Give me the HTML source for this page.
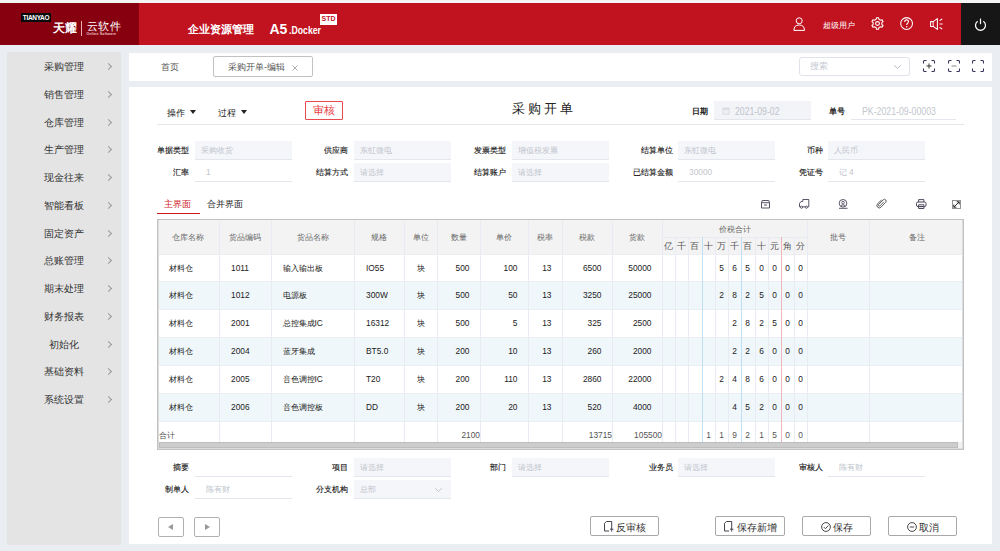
<!DOCTYPE html>
<html><head><meta charset="utf-8">
<style>
*{margin:0;padding:0;box-sizing:border-box}
html,body{width:1000px;height:551px;overflow:hidden;background:#eaeef3;font-family:"Liberation Sans",sans-serif;color:#333}
.a{position:absolute;white-space:nowrap}
#top{left:0;top:0;width:1000px;height:3px;background:#f4f4f4}
#hdr{left:0;top:3px;width:1000px;height:42px;background:#c1121f}
#logo{left:0;top:3px;width:139px;height:42px;background:#860010}
#pwr{left:961px;top:3px;width:39px;height:42px;background:#161616}
#side{left:7px;top:52px;width:114px;height:493px;background:#e4e4e4}
.mi{position:absolute;left:0;width:115px;height:20px;font-size:10.3px;color:#333;line-height:20px;font-weight:500}
.mi span{position:absolute;left:0;width:113px;text-align:center}
.mi i{position:absolute;left:99px;top:7px;width:5px;height:5px;border-right:1px solid #999;border-top:1px solid #999;transform:rotate(45deg)}
#tabbar{left:129px;top:53px;width:863px;height:28px;background:#fff}
#panel{left:129px;top:87px;width:863px;height:457px;background:#fff}
.lbl{position:absolute;font-size:8.4px;color:#111;text-align:right;line-height:19px;height:19px;font-weight:500;-webkit-text-stroke:0.12px #111}
.inp{position:absolute;height:19px;font-size:8.2px;color:#c0c4cc;line-height:19px;padding-left:6px;border-bottom:1px solid #e3e6ec}
.inp.bg{background:#f5f6fa}
.th{position:absolute;font-size:8px;color:#666;text-align:center;line-height:14px}
.td{position:absolute;font-size:8.4px;color:#222;line-height:14px;font-weight:500}
.n{font-size:9.5px;transform:scaleX(0.88)}
.nl{transform-origin:0 0}.nr{transform-origin:100% 0}.nc{transform-origin:50% 0}
.vl{position:absolute;width:1px;background:#e9ebf2}
.btn{position:absolute;height:20px;border:1px solid #a9a9a9;border-radius:2px;background:#fff;font-size:10.5px;color:#333;line-height:18px}
svg{position:absolute;overflow:visible}
</style></head><body>
<div class="a" id="top"></div><div class="a" id="hdr"></div><div class="a" id="logo"></div><div class="a" id="pwr"></div>
<div class="a" style="left:21px;top:12.5px;width:30px;height:9px;background:#0a0a0a"></div>
<div class="a" style="left:21px;top:12.5px;width:30px;height:9px;color:#fff;font-size:6.5px;line-height:9px;text-align:center;font-weight:bold;letter-spacing:-0.3px">TIANYAO</div>
<div class="a" style="left:52.5px;top:19.5px;color:#fff;font-size:12.4px;line-height:16px;font-weight:bold">天耀</div>
<div class="a" style="left:81px;top:21px;width:1px;height:15px;background:#e8b0b5"></div>
<div class="a" style="left:87px;top:19.8px;color:#fff;font-size:10.5px;line-height:13px;letter-spacing:0.3px">云软件</div>
<div class="a" style="left:86.5px;top:32.5px;color:#f0c8cc;font-size:3.5px;line-height:3px;letter-spacing:0.2px;font-weight:bold">Online Software</div>
<div class="a" style="left:187.5px;top:21.3px;color:#fff;font-size:11.4px;line-height:16px;font-weight:bold">企业资源管理</div>
<div class="a" style="left:269.5px;top:21px;color:#fff;font-size:14px;line-height:16px;font-weight:bold">A5</div>
<div class="a" style="left:288.5px;top:23.8px;color:#fff;font-size:10.5px;line-height:12px;font-weight:bold;transform:scaleX(0.83);transform-origin:0 0">.Docker</div>
<div class="a" style="left:320px;top:14px;width:17px;height:10.5px;background:#fff;color:#c1121f;font-size:7px;line-height:10.5px;text-align:center;font-weight:bold">STD</div>
<svg style="left:793px;top:17px" width="13" height="14" viewBox="0 0 13 14"><circle cx="6.2" cy="3.8" r="3" fill="none" stroke="#fff" stroke-width="1"/><path d="M0.9 13.4 Q0.9 8 6.2 8 Q11.5 8 11.5 13.4 Z" fill="none" stroke="#fff" stroke-width="1" stroke-linejoin="round"/></svg>
<div class="a" style="left:823.3px;top:20.3px;color:#fff;font-size:8.2px;line-height:12px;font-weight:500">超级用户</div>
<svg style="left:870.5px;top:17.3px" width="13" height="13" viewBox="0 0 13 13"><path d="M4.35 2.78 L5.23 2.08 L5.48 0.69 L7.52 0.69 L7.77 2.08 L8.65 2.78 L9.70 3.19 L11.02 2.71 L12.04 4.48 L10.96 5.39 L10.80 6.50 L10.96 7.61 L12.04 8.52 L11.02 10.29 L9.70 9.81 L8.65 10.22 L7.77 10.92 L7.52 12.31 L5.48 12.31 L5.23 10.92 L4.35 10.22 L3.30 9.81 L1.98 10.29 L0.96 8.52 L2.04 7.61 L2.20 6.50 L2.04 5.39 L0.96 4.48 L1.98 2.71 L3.30 3.19Z" fill="none" stroke="#fff" stroke-width="1.1" stroke-linejoin="round"/><circle cx="6.5" cy="6.5" r="1.9" fill="none" stroke="#fff" stroke-width="1.1"/></svg>
<svg style="left:900px;top:17.4px" width="13" height="13" viewBox="0 0 13 13"><circle cx="6.6" cy="6.5" r="5.9" fill="none" stroke="#fff" stroke-width="1.05"/><path d="M4.7 4.9 C4.7 3.6 5.6 2.9 6.6 2.9 C7.7 2.9 8.5 3.6 8.5 4.7 C8.5 6 6.7 6.2 6.7 7.9" fill="none" stroke="#fff" stroke-width="1.1"/><circle cx="6.7" cy="9.7" r="0.75" fill="#fff"/></svg>
<svg style="left:930px;top:18px" width="13" height="12" viewBox="0 0 13 12"><path d="M0.6 3.6h2.6L7.4 0.6v10.8L3.2 8.4H0.6z" fill="none" stroke="#fff" stroke-width="1.05" stroke-linejoin="round"/><path d="M3.2 3.6v4.8" stroke="#fff" stroke-width="0.9"/><path d="M9.6 2.6l2.6-1.6M9.6 6h3M9.6 9.4l2.6 1.6" stroke="#fff" stroke-width="1.05"/></svg>
<svg style="left:973.5px;top:17.8px" width="13" height="13" viewBox="0 0 13 13"><path d="M3.7 3.2 A5 5 0 1 0 9.3 3.2" fill="none" stroke="#fff" stroke-width="1.25"/><path d="M6.5 0.6v5.6" stroke="#fff" stroke-width="1.25"/></svg>
<div class="a" id="side">
<div class="mi" style="top:5.0px"><span>采购管理</span><i></i></div>
<div class="mi" style="top:32.8px"><span>销售管理</span><i></i></div>
<div class="mi" style="top:60.5px"><span>仓库管理</span><i></i></div>
<div class="mi" style="top:88.2px"><span>生产管理</span><i></i></div>
<div class="mi" style="top:116.0px"><span>现金往来</span><i></i></div>
<div class="mi" style="top:143.8px"><span>智能看板</span><i></i></div>
<div class="mi" style="top:171.5px"><span>固定资产</span><i></i></div>
<div class="mi" style="top:199.2px"><span>总账管理</span><i></i></div>
<div class="mi" style="top:227.0px"><span>期末处理</span><i></i></div>
<div class="mi" style="top:254.8px"><span>财务报表</span><i></i></div>
<div class="mi" style="top:282.5px"><span>初始化</span><i></i></div>
<div class="mi" style="top:310.2px"><span>基础资料</span><i></i></div>
<div class="mi" style="top:338.0px"><span>系统设置</span><i></i></div>
</div>
<div class="a" id="tabbar"></div>
<div class="a" style="left:161px;top:60px;font-size:8.8px;line-height:14px;color:#555">首页</div>
<div class="a" style="left:213px;top:56px;width:100px;height:21px;border:1px solid #c2c2c2;border-radius:2px"></div>
<div class="a" style="left:228px;top:60px;font-size:8.8px;line-height:14px;color:#555">采购开单-编辑</div>
<svg style="left:291.5px;top:64.5px" width="6" height="6" viewBox="0 0 6 6"><path d="M0.4 0.4l5.2 5.2M5.6 0.4l-5.2 5.2" stroke="#9a9a9a" stroke-width="0.8"/></svg>
<div class="a" style="left:799px;top:57px;width:111px;height:19px;border:1px solid #dfe2e8;border-radius:3px"></div>
<div class="a" style="left:809.5px;top:60px;font-size:8.5px;line-height:13px;color:#c5c8d0">搜索</div>
<svg style="left:894px;top:64.5px" width="7" height="4" viewBox="0 0 7 4"><path d="M0.3 0.3l3.2 3.2 3.2-3.2" fill="none" stroke="#aab" stroke-width="0.8"/></svg>
<svg style="left:923px;top:60px" width="12" height="12" viewBox="0 0 12 12"><path d="M0.5 3.5V1.5Q0.5 0.5 1.5 0.5H3.5M8.5 0.5H10.5Q11.5 0.5 11.5 1.5V3.5M11.5 8.5V10.5Q11.5 11.5 10.5 11.5H8.5M3.5 11.5H1.5Q0.5 11.5 0.5 10.5V8.5" fill="none" stroke="#3b2d5c" stroke-width="1.05"/><path d="M6 3.5v5M3.5 6h5" stroke="#333" stroke-width="1"/></svg>
<svg style="left:947.5px;top:60px" width="12" height="12" viewBox="0 0 12 12"><path d="M0.5 3.5V1.5Q0.5 0.5 1.5 0.5H3.5M8.5 0.5H10.5Q11.5 0.5 11.5 1.5V3.5M11.5 8.5V10.5Q11.5 11.5 10.5 11.5H8.5M3.5 11.5H1.5Q0.5 11.5 0.5 10.5V8.5" fill="none" stroke="#3b2d5c" stroke-width="1.05"/><path d="M3.5 6h5" stroke="#888" stroke-width="1"/></svg>
<svg style="left:971.5px;top:60px" width="12" height="12" viewBox="0 0 12 12"><path d="M0.5 3.5V1.5Q0.5 0.5 1.5 0.5H3.5M8.5 0.5H10.5Q11.5 0.5 11.5 1.5V3.5M11.5 8.5V10.5Q11.5 11.5 10.5 11.5H8.5M3.5 11.5H1.5Q0.5 11.5 0.5 10.5V8.5" fill="none" stroke="#3b2d5c" stroke-width="1.05"/></svg>
<div class="a" id="panel"></div>
<div class="a" style="left:167px;top:105.8px;font-size:8.5px;line-height:14px;color:#222">操作</div>
<svg style="left:190px;top:109.5px" width="6" height="4" viewBox="0 0 6 4"><path d="M0 0h6L3 4z" fill="#222"/></svg>
<div class="a" style="left:218px;top:105.8px;font-size:8.5px;line-height:14px;color:#222">过程</div>
<svg style="left:241px;top:109.5px" width="6" height="4" viewBox="0 0 6 4"><path d="M0 0h6L3 4z" fill="#222"/></svg>
<div class="a" style="left:305px;top:101px;width:38px;height:19px;border:1px solid #e84a50;border-radius:1px;color:#e63c43;font-size:10.8px;line-height:17px;text-align:center">审核</div>
<div class="a" style="left:511.5px;top:99.5px;font-size:13px;line-height:17px;color:#222;letter-spacing:3px">采购开单</div>
<div class="a" style="left:692px;top:105px;font-size:8.2px;line-height:13px;color:#222;font-weight:bold">日期</div>
<div class="a" style="left:714px;top:101px;width:97px;height:19px;background:#f2f4f8;border-bottom:1px solid #e3e6ec"></div>
<svg style="left:722px;top:107px" width="8" height="8" viewBox="0 0 8 8"><rect x="0.3" y="0.6" width="7.4" height="7.1" rx="1.2" fill="#d9dce2"/><rect x="1.3" y="2.8" width="5.4" height="3.9" fill="#eceef2"/></svg>
<div class="a" style="left:734.5px;top:104.5px;font-size:10px;line-height:13px;color:#bfc3cb;transform:scaleX(0.87);transform-origin:0 0">2021-09-02</div>
<div class="a" style="left:828.5px;top:104.5px;font-size:8.2px;line-height:13px;color:#222;font-weight:bold">单号</div>
<div class="a" style="left:851px;top:119px;width:105px;height:1px;background:#e3e6ec"></div>
<div class="a" style="left:862px;top:104.5px;font-size:10px;line-height:13px;color:#c3c6cd;transform:scaleX(0.875);transform-origin:0 0">PK-2021-09-00003</div>
<div class="a" style="left:157px;top:124px;width:807px;height:1px;background:#e6e6e6"></div>
<div class="lbl" style="left:119px;top:140.5px;width:70px">单据类型</div>
<div class="inp bg" style="left:195px;top:140.5px;width:97px;color:#c0c4cc">采购收货</div>
<div class="lbl" style="left:278px;top:140.5px;width:70px">供应商</div>
<div class="inp bg" style="left:354px;top:140.5px;width:97px;color:#c0c4cc">东虹微电</div>
<div class="lbl" style="left:436px;top:140.5px;width:70px">发票类型</div>
<div class="inp bg" style="left:512px;top:140.5px;width:97px;color:#c0c4cc">增值税发票</div>
<div class="lbl" style="left:603px;top:140.5px;width:70px">结算单位</div>
<div class="inp bg" style="left:678px;top:140.5px;width:97px;color:#c0c4cc">东虹微电</div>
<div class="lbl" style="left:753px;top:140.5px;width:70px">币种</div>
<div class="inp bg" style="left:828px;top:140.5px;width:97px;color:#c0c4cc">人民币</div>
<div class="lbl" style="left:119px;top:162.5px;width:70px">汇率</div>
<div class="inp" style="left:195px;top:162.5px;width:97px;color:#c0c4cc"></div>
<div class="a" style="left:205.5px;top:165.0px;font-size:9.5px;line-height:14px;color:#c3c6cd;transform:scaleX(0.88);transform-origin:0 0">1</div>
<div class="lbl" style="left:278px;top:162.5px;width:70px">结算方式</div>
<div class="inp bg" style="left:354px;top:162.5px;width:97px;color:#c0c4cc">请选择</div>
<div class="lbl" style="left:436px;top:162.5px;width:70px">结算账户</div>
<div class="inp bg" style="left:512px;top:162.5px;width:97px;color:#c0c4cc">请选择</div>
<div class="lbl" style="left:603px;top:162.5px;width:70px">已结算金额</div>
<div class="inp" style="left:678px;top:162.5px;width:97px;color:#c0c4cc"></div>
<div class="a" style="left:689px;top:165.0px;font-size:9.5px;line-height:14px;color:#c3c6cd;transform:scaleX(0.88);transform-origin:0 0">30000</div>
<div class="lbl" style="left:753px;top:162.5px;width:70px">凭证号</div>
<div class="inp" style="left:828px;top:162.5px;width:97px;color:#c0c4cc">&nbsp;&nbsp;记</div>
<div class="a" style="left:849px;top:165.0px;font-size:9.5px;line-height:14px;color:#c3c6cd;transform:scaleX(0.88);transform-origin:0 0">4</div>
<div class="a" style="left:164px;top:197px;font-size:9.3px;line-height:14px;color:#d0141e">主界面</div>
<div class="a" style="left:157px;top:212.5px;width:43px;height:1.5px;background:#d0141e"></div>
<div class="a" style="left:207px;top:197px;font-size:9.3px;line-height:14px;color:#222">合并界面</div>
<svg style="left:761px;top:200px" width="9" height="9" viewBox="0 0 9 9"><path d="M1.2 0.5h6.6l0.7 2.2v5.3h-8v-5.3z" fill="none" stroke="#4a4258" stroke-width="0.9" stroke-linejoin="round"/><path d="M0.5 2.7h8M3 5h3" stroke="#4a4258" stroke-width="0.9"/></svg>
<svg style="left:799px;top:199.2px" width="11" height="10" viewBox="0 0 11 10"><path d="M3.8 0.5h6v7.3h-1.2M3.8 0.5v2H2L0.5 4.5v3.3h0.8M3.6 7.8h2.6" fill="none" stroke="#4a4258" stroke-width="0.9" stroke-linejoin="round"/><circle cx="2.5" cy="8.2" r="1.1" fill="none" stroke="#4a4258" stroke-width="0.9"/><circle cx="7.4" cy="8.2" r="1.1" fill="none" stroke="#4a4258" stroke-width="0.9"/></svg>
<svg style="left:838px;top:199.2px" width="11" height="10" viewBox="0 0 11 10"><circle cx="5" cy="4.3" r="3.8" fill="none" stroke="#4a4258" stroke-width="0.9"/><circle cx="5" cy="3.6" r="1.3" fill="none" stroke="#4a4258" stroke-width="0.8"/><path d="M2.8 6.6Q5 4.8 7.2 6.6M1 9.3h8.5" fill="none" stroke="#4a4258" stroke-width="0.9"/></svg>
<svg style="left:877px;top:199px" width="10" height="10" viewBox="0 0 10 10"><path d="M6.4 3.2L3 6.9a1 1 0 0 1-1.5-1.4L6.2 0.9a1.7 1.7 0 0 1 2.5 2.4L4 8.2a2.4 2.4 0 0 1-3.4-3.4L4.4 1" fill="none" stroke="#555" stroke-width="0.95" stroke-linecap="round"/></svg>
<svg style="left:915.5px;top:199px" width="11" height="10" viewBox="0 0 11 10"><rect x="0.5" y="3" width="9.5" height="4.6" rx="1.5" fill="none" stroke="#4a4258" stroke-width="1"/><path d="M2.6 3V0.6h5.3V3M2.6 5.8v3.7h5.3V5.8zM4 7.6h2.5" fill="none" stroke="#4a4258" stroke-width="0.95"/></svg>
<svg style="left:952px;top:200px" width="9" height="9" viewBox="0 0 9 9"><rect x="0.5" y="0.5" width="8" height="8" fill="none" stroke="#888" stroke-width="0.9"/><path d="M1.8 7.2L7.2 1.8M4.6 1.8h2.6v2.6M1.8 4.6v2.6h2.6" fill="none" stroke="#222" stroke-width="0.95"/></svg>
<div class="a" style="left:157px;top:219px;width:807px;height:231px;border:1px solid #c2c2c2;box-shadow:inset 1px 1px 0 #dcdcdc,inset -1px -1px 0 #dcdcdc;background:#fff"></div>
<div class="a" style="left:159px;top:220px;width:803px;height:34px;background:#f3f3f3"></div>
<div class="a" style="left:159px;top:281px;width:803px;height:28px;background:#f0f7fb"></div>
<div class="a" style="left:159px;top:337px;width:803px;height:28px;background:#f0f7fb"></div>
<div class="a" style="left:159px;top:393px;width:803px;height:28px;background:#f0f7fb"></div>
<div class="a" style="left:159px;top:254px;width:803px;height:1px;background:#eceef3"></div>
<div class="a" style="left:159px;top:281px;width:803px;height:1px;background:#eceef3"></div>
<div class="a" style="left:159px;top:309px;width:803px;height:1px;background:#eceef3"></div>
<div class="a" style="left:159px;top:337px;width:803px;height:1px;background:#eceef3"></div>
<div class="a" style="left:159px;top:365px;width:803px;height:1px;background:#eceef3"></div>
<div class="a" style="left:159px;top:393px;width:803px;height:1px;background:#eceef3"></div>
<div class="a" style="left:159px;top:421px;width:803px;height:1px;background:#eceef3"></div>
<div class="vl" style="left:219.0px;top:220px;height:222px;background:#e9ebf2"></div>
<div class="vl" style="left:271.0px;top:220px;height:222px;background:#e9ebf2"></div>
<div class="vl" style="left:354.0px;top:220px;height:222px;background:#e9ebf2"></div>
<div class="vl" style="left:404.0px;top:220px;height:222px;background:#e9ebf2"></div>
<div class="vl" style="left:437.0px;top:220px;height:222px;background:#e9ebf2"></div>
<div class="vl" style="left:480.0px;top:220px;height:222px;background:#e9ebf2"></div>
<div class="vl" style="left:528.0px;top:220px;height:222px;background:#e9ebf2"></div>
<div class="vl" style="left:562.0px;top:220px;height:222px;background:#e9ebf2"></div>
<div class="vl" style="left:612.0px;top:220px;height:222px;background:#e9ebf2"></div>
<div class="vl" style="left:662.0px;top:220px;height:222px;background:#e9ebf2"></div>
<div class="vl" style="left:675.2px;top:220px;height:222px;background:#e9ebf2"></div>
<div class="vl" style="left:688.4px;top:220px;height:222px;background:#e9ebf2"></div>
<div class="vl" style="left:701.6px;top:220px;height:222px;background:#e9ebf2"></div>
<div class="vl" style="left:714.8px;top:220px;height:222px;background:#e9ebf2"></div>
<div class="vl" style="left:728.0px;top:220px;height:222px;background:#e9ebf2"></div>
<div class="vl" style="left:741.3px;top:220px;height:222px;background:#e9ebf2"></div>
<div class="vl" style="left:754.5px;top:220px;height:222px;background:#e9ebf2"></div>
<div class="vl" style="left:767.7px;top:220px;height:222px;background:#e9ebf2"></div>
<div class="vl" style="left:780.9px;top:220px;height:222px;background:#e9ebf2"></div>
<div class="vl" style="left:794.1px;top:220px;height:222px;background:#e9ebf2"></div>
<div class="vl" style="left:807.3px;top:220px;height:222px;background:#e9ebf2"></div>
<div class="vl" style="left:869.0px;top:220px;height:222px;background:#e9ebf2"></div>
<div class="a" style="left:663.0px;top:220px;width:144.3px;height:17px;background:#f3f3f3"></div>
<div class="a" style="left:663.0px;top:237px;width:144.3px;height:1px;background:#e9ebf2"></div>
<div class="vl" style="left:701.6px;top:237px;height:205px;background:#bfdff5"></div>
<div class="vl" style="left:741.3px;top:237px;height:205px;background:#bfdff5"></div>
<div class="vl" style="left:780.9px;top:237px;height:205px;background:#f3b5bd"></div>
<div class="th" style="left:157.0px;top:230.5px;width:62.0px">仓库名称</div>
<div class="th" style="left:219.0px;top:230.5px;width:52.0px">货品编码</div>
<div class="th" style="left:271.0px;top:230.5px;width:83.0px">货品名称</div>
<div class="th" style="left:354.0px;top:230.5px;width:50.0px">规格</div>
<div class="th" style="left:404.0px;top:230.5px;width:33.0px">单位</div>
<div class="th" style="left:437.0px;top:230.5px;width:43.0px">数量</div>
<div class="th" style="left:480.0px;top:230.5px;width:48.0px">单价</div>
<div class="th" style="left:528.0px;top:230.5px;width:34.0px">税率</div>
<div class="th" style="left:562.0px;top:230.5px;width:50.0px">税款</div>
<div class="th" style="left:612.0px;top:230.5px;width:50.0px">货款</div>
<div class="th" style="left:662.0px;top:222.5px;width:145.3px">价税合计</div>
<div class="th" style="left:662.0px;top:238.5px;width:13.2px;font-size:9px;color:#555">亿</div>
<div class="th" style="left:675.2px;top:238.5px;width:13.2px;font-size:9px;color:#555">千</div>
<div class="th" style="left:688.4px;top:238.5px;width:13.2px;font-size:9px;color:#555">百</div>
<div class="th" style="left:701.6px;top:238.5px;width:13.2px;font-size:9px;color:#555">十</div>
<div class="th" style="left:714.8px;top:238.5px;width:13.2px;font-size:9px;color:#555">万</div>
<div class="th" style="left:728.0px;top:238.5px;width:13.2px;font-size:9px;color:#555">千</div>
<div class="th" style="left:741.3px;top:238.5px;width:13.2px;font-size:9px;color:#555">百</div>
<div class="th" style="left:754.5px;top:238.5px;width:13.2px;font-size:9px;color:#555">十</div>
<div class="th" style="left:767.7px;top:238.5px;width:13.2px;font-size:9px;color:#555">元</div>
<div class="th" style="left:780.9px;top:238.5px;width:13.2px;font-size:9px;color:#555">角</div>
<div class="th" style="left:794.1px;top:238.5px;width:13.2px;font-size:9px;color:#555">分</div>
<div class="th" style="left:807.3px;top:230.5px;width:62.2px">批号</div>
<div class="th" style="left:869.5px;top:230.5px;width:94.5px">备注</div>
<div class="td" style="left:168.5px;top:260.5px">材料仓</div>
<div class="td n nl" style="left:230.5px;top:260.5px">1011</div>
<div class="td" style="left:282.5px;top:260.5px">输入输出板</div>
<div class="td n nl" style="left:365.5px;top:260.5px">IO55</div>
<div class="td" style="left:404.0px;top:260.5px;width:33.0px;text-align:center">块</div>
<div class="td n nr" style="left:437.0px;top:260.5px;width:32.5px;text-align:right">500</div>
<div class="td n nr" style="left:480.0px;top:260.5px;width:37.5px;text-align:right">100</div>
<div class="td n nr" style="left:528.0px;top:260.5px;width:23.5px;text-align:right">13</div>
<div class="td n nr" style="left:562.0px;top:260.5px;width:39.5px;text-align:right">6500</div>
<div class="td n nr" style="left:612.0px;top:260.5px;width:39.5px;text-align:right">50000</div>
<div class="td n nc" style="left:794.1px;top:260.5px;width:13.2px;text-align:center">0</div>
<div class="td n nc" style="left:780.9px;top:260.5px;width:13.2px;text-align:center">0</div>
<div class="td n nc" style="left:767.7px;top:260.5px;width:13.2px;text-align:center">0</div>
<div class="td n nc" style="left:754.5px;top:260.5px;width:13.2px;text-align:center">0</div>
<div class="td n nc" style="left:741.3px;top:260.5px;width:13.2px;text-align:center">5</div>
<div class="td n nc" style="left:728.0px;top:260.5px;width:13.2px;text-align:center">6</div>
<div class="td n nc" style="left:714.8px;top:260.5px;width:13.2px;text-align:center">5</div>
<div class="td" style="left:168.5px;top:288.0px">材料仓</div>
<div class="td n nl" style="left:230.5px;top:288.0px">1012</div>
<div class="td" style="left:282.5px;top:288.0px">电源板</div>
<div class="td n nl" style="left:365.5px;top:288.0px">300W</div>
<div class="td" style="left:404.0px;top:288.0px;width:33.0px;text-align:center">块</div>
<div class="td n nr" style="left:437.0px;top:288.0px;width:32.5px;text-align:right">500</div>
<div class="td n nr" style="left:480.0px;top:288.0px;width:37.5px;text-align:right">50</div>
<div class="td n nr" style="left:528.0px;top:288.0px;width:23.5px;text-align:right">13</div>
<div class="td n nr" style="left:562.0px;top:288.0px;width:39.5px;text-align:right">3250</div>
<div class="td n nr" style="left:612.0px;top:288.0px;width:39.5px;text-align:right">25000</div>
<div class="td n nc" style="left:794.1px;top:288.0px;width:13.2px;text-align:center">0</div>
<div class="td n nc" style="left:780.9px;top:288.0px;width:13.2px;text-align:center">0</div>
<div class="td n nc" style="left:767.7px;top:288.0px;width:13.2px;text-align:center">0</div>
<div class="td n nc" style="left:754.5px;top:288.0px;width:13.2px;text-align:center">5</div>
<div class="td n nc" style="left:741.3px;top:288.0px;width:13.2px;text-align:center">2</div>
<div class="td n nc" style="left:728.0px;top:288.0px;width:13.2px;text-align:center">8</div>
<div class="td n nc" style="left:714.8px;top:288.0px;width:13.2px;text-align:center">2</div>
<div class="td" style="left:168.5px;top:316.0px">材料仓</div>
<div class="td n nl" style="left:230.5px;top:316.0px">2001</div>
<div class="td" style="left:282.5px;top:316.0px">总控集成IC</div>
<div class="td n nl" style="left:365.5px;top:316.0px">16312</div>
<div class="td" style="left:404.0px;top:316.0px;width:33.0px;text-align:center">块</div>
<div class="td n nr" style="left:437.0px;top:316.0px;width:32.5px;text-align:right">500</div>
<div class="td n nr" style="left:480.0px;top:316.0px;width:37.5px;text-align:right">5</div>
<div class="td n nr" style="left:528.0px;top:316.0px;width:23.5px;text-align:right">13</div>
<div class="td n nr" style="left:562.0px;top:316.0px;width:39.5px;text-align:right">325</div>
<div class="td n nr" style="left:612.0px;top:316.0px;width:39.5px;text-align:right">2500</div>
<div class="td n nc" style="left:794.1px;top:316.0px;width:13.2px;text-align:center">0</div>
<div class="td n nc" style="left:780.9px;top:316.0px;width:13.2px;text-align:center">0</div>
<div class="td n nc" style="left:767.7px;top:316.0px;width:13.2px;text-align:center">5</div>
<div class="td n nc" style="left:754.5px;top:316.0px;width:13.2px;text-align:center">2</div>
<div class="td n nc" style="left:741.3px;top:316.0px;width:13.2px;text-align:center">8</div>
<div class="td n nc" style="left:728.0px;top:316.0px;width:13.2px;text-align:center">2</div>
<div class="td" style="left:168.5px;top:344.0px">材料仓</div>
<div class="td n nl" style="left:230.5px;top:344.0px">2004</div>
<div class="td" style="left:282.5px;top:344.0px">蓝牙集成</div>
<div class="td n nl" style="left:365.5px;top:344.0px">BT5.0</div>
<div class="td" style="left:404.0px;top:344.0px;width:33.0px;text-align:center">块</div>
<div class="td n nr" style="left:437.0px;top:344.0px;width:32.5px;text-align:right">200</div>
<div class="td n nr" style="left:480.0px;top:344.0px;width:37.5px;text-align:right">10</div>
<div class="td n nr" style="left:528.0px;top:344.0px;width:23.5px;text-align:right">13</div>
<div class="td n nr" style="left:562.0px;top:344.0px;width:39.5px;text-align:right">260</div>
<div class="td n nr" style="left:612.0px;top:344.0px;width:39.5px;text-align:right">2000</div>
<div class="td n nc" style="left:794.1px;top:344.0px;width:13.2px;text-align:center">0</div>
<div class="td n nc" style="left:780.9px;top:344.0px;width:13.2px;text-align:center">0</div>
<div class="td n nc" style="left:767.7px;top:344.0px;width:13.2px;text-align:center">0</div>
<div class="td n nc" style="left:754.5px;top:344.0px;width:13.2px;text-align:center">6</div>
<div class="td n nc" style="left:741.3px;top:344.0px;width:13.2px;text-align:center">2</div>
<div class="td n nc" style="left:728.0px;top:344.0px;width:13.2px;text-align:center">2</div>
<div class="td" style="left:168.5px;top:372.0px">材料仓</div>
<div class="td n nl" style="left:230.5px;top:372.0px">2005</div>
<div class="td" style="left:282.5px;top:372.0px">音色调控IC</div>
<div class="td n nl" style="left:365.5px;top:372.0px">T20</div>
<div class="td" style="left:404.0px;top:372.0px;width:33.0px;text-align:center">块</div>
<div class="td n nr" style="left:437.0px;top:372.0px;width:32.5px;text-align:right">200</div>
<div class="td n nr" style="left:480.0px;top:372.0px;width:37.5px;text-align:right">110</div>
<div class="td n nr" style="left:528.0px;top:372.0px;width:23.5px;text-align:right">13</div>
<div class="td n nr" style="left:562.0px;top:372.0px;width:39.5px;text-align:right">2860</div>
<div class="td n nr" style="left:612.0px;top:372.0px;width:39.5px;text-align:right">22000</div>
<div class="td n nc" style="left:794.1px;top:372.0px;width:13.2px;text-align:center">0</div>
<div class="td n nc" style="left:780.9px;top:372.0px;width:13.2px;text-align:center">0</div>
<div class="td n nc" style="left:767.7px;top:372.0px;width:13.2px;text-align:center">0</div>
<div class="td n nc" style="left:754.5px;top:372.0px;width:13.2px;text-align:center">6</div>
<div class="td n nc" style="left:741.3px;top:372.0px;width:13.2px;text-align:center">8</div>
<div class="td n nc" style="left:728.0px;top:372.0px;width:13.2px;text-align:center">4</div>
<div class="td n nc" style="left:714.8px;top:372.0px;width:13.2px;text-align:center">2</div>
<div class="td" style="left:168.5px;top:400.0px">材料仓</div>
<div class="td n nl" style="left:230.5px;top:400.0px">2006</div>
<div class="td" style="left:282.5px;top:400.0px">音色调控板</div>
<div class="td n nl" style="left:365.5px;top:400.0px">DD</div>
<div class="td" style="left:404.0px;top:400.0px;width:33.0px;text-align:center">块</div>
<div class="td n nr" style="left:437.0px;top:400.0px;width:32.5px;text-align:right">200</div>
<div class="td n nr" style="left:480.0px;top:400.0px;width:37.5px;text-align:right">20</div>
<div class="td n nr" style="left:528.0px;top:400.0px;width:23.5px;text-align:right">13</div>
<div class="td n nr" style="left:562.0px;top:400.0px;width:39.5px;text-align:right">520</div>
<div class="td n nr" style="left:612.0px;top:400.0px;width:39.5px;text-align:right">4000</div>
<div class="td n nc" style="left:794.1px;top:400.0px;width:13.2px;text-align:center">0</div>
<div class="td n nc" style="left:780.9px;top:400.0px;width:13.2px;text-align:center">0</div>
<div class="td n nc" style="left:767.7px;top:400.0px;width:13.2px;text-align:center">0</div>
<div class="td n nc" style="left:754.5px;top:400.0px;width:13.2px;text-align:center">2</div>
<div class="td n nc" style="left:741.3px;top:400.0px;width:13.2px;text-align:center">5</div>
<div class="td n nc" style="left:728.0px;top:400.0px;width:13.2px;text-align:center">4</div>
<div class="td" style="left:159px;top:428px;color:#555">合计</div>
<div class="td n nr" style="left:437.0px;top:428px;width:43.0px;text-align:right;color:#555">2100</div>
<div class="td n nr" style="left:562.0px;top:428px;width:50.0px;text-align:right;color:#555">13715</div>
<div class="td n nr" style="left:612.0px;top:428px;width:50.0px;text-align:right;color:#555">105500</div>
<div class="td n nc" style="left:794.1px;top:428px;width:13.2px;text-align:center;color:#555">0</div>
<div class="td n nc" style="left:780.9px;top:428px;width:13.2px;text-align:center;color:#555">0</div>
<div class="td n nc" style="left:767.7px;top:428px;width:13.2px;text-align:center;color:#555">5</div>
<div class="td n nc" style="left:754.5px;top:428px;width:13.2px;text-align:center;color:#555">1</div>
<div class="td n nc" style="left:741.3px;top:428px;width:13.2px;text-align:center;color:#555">2</div>
<div class="td n nc" style="left:728.0px;top:428px;width:13.2px;text-align:center;color:#555">9</div>
<div class="td n nc" style="left:714.8px;top:428px;width:13.2px;text-align:center;color:#555">1</div>
<div class="td n nc" style="left:701.6px;top:428px;width:13.2px;text-align:center;color:#555">1</div>
<div class="a" style="left:159px;top:442px;width:803px;height:6px;background:#f1f1f1"></div>
<div class="a" style="left:159px;top:442px;width:799px;height:6px;background:#cdcdcd;border:1px solid #bdbdbd"></div>
<div class="lbl" style="left:119px;top:458px;width:70px">摘要</div>
<div class="inp" style="left:195px;top:458px;width:97px;color:#c0c4cc"></div>
<div class="lbl" style="left:278px;top:458px;width:70px">项目</div>
<div class="inp bg" style="left:354px;top:458px;width:97px;color:#c0c4cc">请选择</div>
<div class="lbl" style="left:436px;top:458px;width:70px">部门</div>
<div class="inp bg" style="left:512px;top:458px;width:97px;color:#c0c4cc">请选择</div>
<div class="lbl" style="left:603px;top:458px;width:70px">业务员</div>
<div class="inp bg" style="left:678px;top:458px;width:97px;color:#c0c4cc">请选择</div>
<div class="lbl" style="left:753px;top:458px;width:70px">审核人</div>
<div class="inp" style="left:828px;top:458px;width:97px;color:#c0c4cc">&nbsp;&nbsp;陈有财</div>
<div class="lbl" style="left:119px;top:480px;width:70px">制单人</div>
<div class="inp" style="left:195px;top:480px;width:97px;color:#c0c4cc">&nbsp;&nbsp;陈有财</div>
<div class="lbl" style="left:278px;top:480px;width:70px">分支机构</div>
<div class="inp bg" style="left:354px;top:480px;width:97px;color:#c0c4cc">总部</div>
<svg style="left:435px;top:488px" width="7" height="4" viewBox="0 0 7 4"><path d="M0.3 0.3l3.2 3.2 3.2-3.2" fill="none" stroke="#b5b8c0" stroke-width="0.8"/></svg>
<div class="a" style="left:157.5px;top:516.5px;width:26px;height:20px;border:1px solid #b0b0b0;border-radius:2px"></div>
<svg style="left:168px;top:523.5px" width="5" height="6" viewBox="0 0 5 6"><path d="M5 0v6L0 3z" fill="#999"/></svg>
<div class="a" style="left:194px;top:516.5px;width:26px;height:20px;border:1px solid #b0b0b0;border-radius:2px"></div>
<svg style="left:205px;top:523.5px" width="5" height="6" viewBox="0 0 5 6"><path d="M0 0v6L5 3z" fill="#999"/></svg>
<div class="btn" style="left:590px;top:516px;width:69px"></div>
<svg style="left:603.8px;top:521px" width="10" height="11" viewBox="0 0 10 11"><path d="M2.4 0.5H7.7V10.6M0.5 2.4V10H5.2M2.4 0.5L0.5 2.4M6 8.2H9.4" fill="none" stroke="#3a3a48" stroke-width="0.95"/></svg>
<div class="a" style="left:616px;top:520.5px;font-size:10px;line-height:13px;color:#333">反审核</div>
<div class="btn" style="left:715px;top:516px;width:70px"></div>
<svg style="left:724px;top:521px" width="10" height="11" viewBox="0 0 10 11"><path d="M2.4 0.5H7.7V10.6M0.5 2.4V10H5.2M2.4 0.5L0.5 2.4M6 8.2H9.4" fill="none" stroke="#3a3a48" stroke-width="0.95"/></svg>
<div class="a" style="left:736.5px;top:520.5px;font-size:10px;line-height:13px;color:#333">保存新增</div>
<div class="btn" style="left:801.5px;top:516px;width:69px"></div>
<svg style="left:820.5px;top:521.5px" width="10" height="10" viewBox="0 0 10 10"><circle cx="5" cy="5" r="4.4" fill="none" stroke="#333" stroke-width="0.9"/><path d="M2.8 5.1l1.6 1.6 3-3.2" fill="none" stroke="#333" stroke-width="0.9"/></svg>
<div class="a" style="left:833px;top:520.5px;font-size:10px;line-height:13px;color:#333">保存</div>
<div class="btn" style="left:888px;top:516px;width:69px"></div>
<svg style="left:906.5px;top:521.5px" width="10" height="10" viewBox="0 0 10 10"><circle cx="5" cy="5" r="4.4" fill="none" stroke="#333" stroke-width="0.9"/><path d="M2.8 5h4.4" fill="none" stroke="#333" stroke-width="0.9"/></svg>
<div class="a" style="left:919px;top:520.5px;font-size:10px;line-height:13px;color:#333">取消</div>
</body></html>
